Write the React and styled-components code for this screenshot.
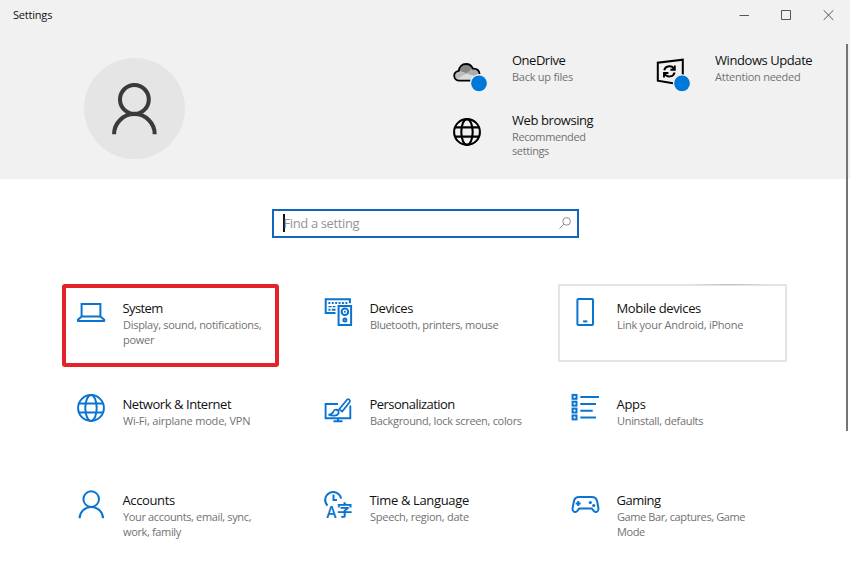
import React from "react";
import styled, { createGlobalStyle } from "styled-components";

const GlobalStyle = createGlobalStyle`
  * {
    box-sizing: border-box;
  }
  body {
    margin: 0;
    background: #fff;
    font-family: "Open Sans", "Noto Sans", sans-serif;
    color: #111;
    overflow: hidden;
  }
`;

const Window = styled.div`
  position: relative;
  width: 850px;
  height: 578px;
  background: #fff;
  overflow: hidden;
`;

const Header = styled.header`
  height: 179px;
  background: #f1f1f1;
`;

const TitleBar = styled.div`
  display: flex;
  justify-content: space-between;
  height: 30px;
  padding-left: 13px;
  font-size: 11px;
  line-height: 30px;
  letter-spacing: -0.2px;
`;

const Caption = styled.div`
  display: flex;
  svg {
    width: 42px;
    height: 30px;
    fill: none;
    stroke: #555;
    stroke-width: 1;
  }
`;

const Profile = styled.div`
  display: flex;
  align-items: flex-start;
  padding: 21px 0 0 84px;
`;

const Avatar = styled.div`
  width: 101px;
  height: 101px;
  margin-top: 6.5px;
  border-radius: 50%;
  background: #e5e5e5;
  svg {
    display: block;
    fill: none;
    stroke: #3a3a3a;
    stroke-width: 4;
  }
`;

const HeaderLinks = styled.div`
  display: grid;
  grid-template-columns: 203px 180px;
  grid-auto-rows: 60px;
  margin-left: 268px;
`;

const Link = styled.div`
  display: flex;
  align-items: flex-start;
`;

const Icon = styled.svg`
  flex: none;
  width: 28px;
  height: 28px;
  margin-top: ${p => (p.$header ? 7 : 0)}px;
  overflow: visible;
  fill: none;
  stroke: ${p => (p.$header ? "#000" : "#0a74d1")};
  stroke-width: ${p => (p.$header ? 2.1 : 2)};
`;

const Label = styled.div`
  width: ${p => p.$width || 150}px;
  margin-left: ${p => (p.$header ? 31 : 17.5)}px;
`;

const Name = styled.div`
  padding-top: ${p => (p.$header ? 0 : 0.5)}px;
  font-size: 13px;
  line-height: 18px;
  letter-spacing: ${p => p.$spacing}px;
  white-space: nowrap;
`;

const Detail = styled.div`
  padding-left: ${p => (p.$header ? 0 : 0.5)}px;
  padding-top: ${p => (p.$header ? 1 : 0.5)}px;
  color: #727272;
  font-size: 11px;
  line-height: ${p => (p.$header ? 14 : 15)}px;
  letter-spacing: ${p => p.$spacing}px;
`;

const SearchBox = styled.div`
  display: flex;
  align-items: center;
  width: 307px;
  height: 29px;
  margin: 30px 0 0 272px;
  padding: 0 6px 1px 9px;
  border: 2px solid #1267bd;
  background: #fff;
  color: #949494;
  font-size: 13px;
  letter-spacing: -0.38px;
  svg {
    margin-left: auto;
    fill: none;
    stroke: #8c8c8c;
    stroke-width: 1;
  }
`;

const Caret = styled.span`
  width: 2px;
  height: 18px;
  margin-right: -1.5px;
  background: #111;
`;

const Categories = styled.main`
  display: grid;
  grid-template-columns: repeat(3, 229px);
  grid-auto-rows: 78px;
  gap: 18px;
  padding: 46px 0 0 64px;
`;

const Tile = styled.div`
  position: relative;
  display: flex;
  align-items: flex-start;
  padding: 12px 0 0 11px;
  border: 2px solid ${p => (p.$hovered ? "#e4e4e4" : "transparent")};
`;

/* soft light along the hovered edge */
const Reveal = styled.span`
  position: absolute;
  top: -2px;
  right: 18px;
  width: 76px;
  height: 1px;
  background: linear-gradient(90deg, transparent, #bbb, transparent);
`;

const Highlight = styled.span`
  position: absolute;
  top: -2px;
  left: -4px;
  width: 217px;
  height: 83px;
  border: 4px solid #e3222a;
  border-radius: 3px;
`;

const Scrollbar = styled.div`
  position: absolute;
  top: 44px;
  right: 2px;
  width: 2px;
  height: 387px;
  background: #757575;
`;

const Globe = () => (
  <>
    <circle cx="14" cy="14" r="12.9" />
    <ellipse cx="14" cy="14" rx="5.7" ry="12.9" />
    <path d="M2 9.4H26M2 18.6H26" />
  </>
);

const Dot = () => (
  <circle cx="26" cy="25.3" r="8.5" fill="#0078d7" stroke="#f1f1f1" strokeWidth="1.2" />
);

const icons = {
  onedrive: (
    <>
      <path
        d="M6.7 22.5C3.4 22.5 1.2 20.4 1.2 17.7C1.2 15.1 3.2 13.2 5.8 12.8C6.2 8.8 9 6 13 6C16.2 6 18.7 7.8 19.9 10.6C24 10.7 26.6 13 26.6 17V22.5Z"
        fill="#dcdcdc"
        stroke="none"
      />
      <path d="M5.8 12.8C6.2 8.8 9 6 13 6C16.2 6 18.7 7.8 19.9 10.6L13.5 15.6Z" fill="#858585" stroke="none" />
      <path d="M5.8 12.8L13.5 15.6L3.5 21.2C.7 19 .6 14 5.8 12.8Z" fill="#bdbdbd" stroke="none" />
      <path d="M13.5 15.6L19.9 10.6C23 10.6 25.5 12 26.4 15L22 18Z" fill="#acacac" stroke="none" />
      <path
        d="M18 22.7H6.7C3.4 22.7 1.2 20.6 1.2 17.8C1.2 15.1 3.2 13.2 5.8 12.8C6.2 8.8 9 6 13 6C16.2 6 18.7 7.8 19.9 10.6C23.5 10.4 26.2 12.3 26.6 16"
        strokeWidth="1.8"
      />
      <Dot />
    </>
  ),
  update: (
    <>
      <path d="M17 25.2L1.8 22.7V4.7L26.8 1.7V19" strokeWidth="2" />
      <path
        d="M8.2 12.2A5.4 5.4 0 0 1 18.2 11.2M18.8 7.4V11.7H14.4M18.6 14.4A5.4 5.4 0 0 1 8.6 15.6M8 19.4V15H12.4"
        strokeWidth="1.9"
      />
      <Dot />
    </>
  ),
  globe: <Globe />,
  system: (
    <>
      <path d="M4.6 18.4V5.9H23.4V18.4" />
      <path d="M4.6 18.4H23.4L27.2 21.8V22.9H.9V21.8Z" strokeLinejoin="round" />
    </>
  ),
  devices: (
    <>
      <path d="M11.5 15H1.7V1.2H25.9V5.2" />
      <path d="M4.4 5H23.5" strokeDasharray="1.9 1.5" />
      <path d="M4.4 8.6H11.5" strokeDasharray="3.2 1" strokeWidth="1.4" />
      <path d="M4.4 11.7H11.5" strokeDasharray="2 1.4 4 1" />
      <path d="M14.6 8.1H27.1V27H14.6Z" />
      <circle cx="20.9" cy="13.8" r="3.3" />
      <circle cx="20.9" cy="13.8" r="1" fill="#0a74d1" stroke="none" />
      <circle cx="20.9" cy="21.9" r="1.5" />
    </>
  ),
  mobile: (
    <>
      <rect x="6.4" y=".9" width="15.6" height="26.2" rx="1" />
      <path d="M12.1 23.4H16.3" />
    </>
  ),
  personalization: (
    <>
      <path d="M14 10H1.6V24.2H26.3V11.5M14 24.2V27M9.5 27.2H18.5" strokeWidth="1.9" />
      <path d="M15.2 15.2L23 5.7C24.2 4.2 26.9 6.2 25.7 8L18.2 17.5Z" strokeWidth="1.8" />
      <path
        d="M4.5 20.7C7.8 20.6 8.4 19.6 9.2 17.8C10.4 14.6 14.6 15.4 14.7 18.2C14.8 21.4 9.9 22.8 4.5 20.7Z"
        strokeWidth="1.8"
      />
    </>
  ),
  apps: (
    <>
      {[0.9, 7.7, 14.6, 21.5].map(y => (
        <rect key={y} x="1.6" y={y} width="3.9" height="3.9" />
      ))}
      <path d="M9.3 3H28M9.3 10H25M9.3 16.8H21.7M9.3 23.6H25" />
    </>
  ),
  accounts: (
    <>
      <circle cx="14.2" cy="9.1" r="7.8" />
      <path d="M2.6 28.2A11.7 11.2 0 0 1 26 28.2" />
    </>
  ),
  time: (
    <>
      <path d="M3.5 15.6A8 8 0 1 1 17.1 8.7M9.5 4.6V10.1H13" />
      <g fill="#0a74d1" stroke="none" fontWeight="600">
        <text x="2.2" y="28" fontSize="15.5">A</text>
        <text x="12.7" y="25.6" fontSize="15.7" fontFamily='"Noto Sans CJK SC", sans-serif' fontWeight="700">字</text>
      </g>
    </>
  ),
  gaming: (
    <>
      <path
        d="M8.2 7H20.8C24.3 7 25.5 8.4 26.1 11.2L27.3 17.5C28.2 22.6 24.2 23.2 22.2 20.4L20.8 18.5H8.2L6.8 20.4C4.8 23.2 .8 22.6 1.7 17.5L2.9 11.2C3.5 8.4 4.7 7 8.2 7Z"
      />
      <path d="M4.7 13.4H9.7M7.2 10.9V15.9" />
      <circle cx="19.3" cy="12.5" r="1.6" fill="#0a74d1" stroke="none" />
      <circle cx="22.7" cy="15.5" r="1.6" fill="#0a74d1" stroke="none" />
    </>
  )
};

// spacing: letter spacing of the name and of the detail line
const headerLinks = [
  { icon: "onedrive", name: "OneDrive", detail: "Back up files", spacing: [-0.5, -0.25] },
  { icon: "update", name: "Windows Update", detail: "Attention needed", spacing: [-0.43, -0.25] },
  { icon: "globe", name: "Web browsing", detail: "Recommended settings", spacing: [-0.42, -0.38] }
];

const categories = [
  {
    icon: "system",
    name: "System",
    detail: "Display, sound, notifications, power",
    spacing: [-0.6, -0.28],
    highlighted: true
  },
  { icon: "devices", name: "Devices", detail: "Bluetooth, printers, mouse", spacing: [-0.4, -0.36] },
  {
    icon: "mobile",
    name: "Mobile devices",
    detail: "Link your Android, iPhone",
    spacing: [-0.36, -0.26],
    hovered: true
  },
  { icon: "globe", name: "Network & Internet", detail: "Wi-Fi, airplane mode, VPN", spacing: [-0.45, -0.2] },
  {
    icon: "personalization",
    name: "Personalization",
    detail: "Background, lock screen, colors",
    spacing: [-0.53, -0.31],
    width: 165
  },
  { icon: "apps", name: "Apps", detail: "Uninstall, defaults", spacing: [-0.3, -0.32] },
  { icon: "accounts", name: "Accounts", detail: "Your accounts, email, sync, work, family", spacing: [-0.38, -0.36] },
  { icon: "time", name: "Time & Language", detail: "Speech, region, date", spacing: [-0.35, -0.27] },
  { icon: "gaming", name: "Gaming", detail: "Game Bar, captures, Game Mode", spacing: [-0.5, -0.4] }
];

function App() {
  return (
    <Window>
      <GlobalStyle />
      <Header>
        <TitleBar>
          <span>Settings</span>
          <Caption>
            <svg viewBox="0 0 42 30">
              <path d="M15.5 15.5H25" />
            </svg>
            <svg viewBox="0 0 42 30">
              <path d="M15.5 10.5H24.5V19.5H15.5Z" />
            </svg>
            <svg viewBox="0 0 42 30">
              <path d="M15.7 10.3L25.3 19.9M25.3 10.3L15.7 19.9" />
            </svg>
          </Caption>
        </TitleBar>
        <Profile>
          <Avatar>
            <svg width="101" height="101" viewBox="0 0 101 101">
              <circle cx="50.4" cy="41.4" r="14.4" />
              <path d="M30.1 76.2A20.3 20.1 0 0 1 70.7 76.2" />
            </svg>
          </Avatar>
          <HeaderLinks>
            {headerLinks.map(item => (
              <Link key={item.name}>
                <Icon $header viewBox="0 0 28 28">
                  {icons[item.icon]}
                </Icon>
                <Label $header $width={96}>
                  <Name $header $spacing={item.spacing[0]}>{item.name}</Name>
                  <Detail $header $spacing={item.spacing[1]}>{item.detail}</Detail>
                </Label>
              </Link>
            ))}
          </HeaderLinks>
        </Profile>
      </Header>
      <SearchBox>
        <Caret />
        Find a setting
        <svg width="12" height="12" viewBox="0 0 12 12">
          <circle cx="7.6" cy="4.4" r="3.8" />
          <path d="M4.8 7.2L.5 11.5" />
        </svg>
      </SearchBox>
      <Categories>
        {categories.map(item => (
          <Tile key={item.name} $hovered={item.hovered}>
            <Icon viewBox="0 0 28 28">{icons[item.icon]}</Icon>
            <Label $width={item.width}>
              <Name $spacing={item.spacing[0]}>{item.name}</Name>
              <Detail $spacing={item.spacing[1]}>{item.detail}</Detail>
            </Label>
            {item.hovered && <Reveal />}
            {item.highlighted && <Highlight />}
          </Tile>
        ))}
      </Categories>
      <Scrollbar />
    </Window>
  );
}

export default App;
